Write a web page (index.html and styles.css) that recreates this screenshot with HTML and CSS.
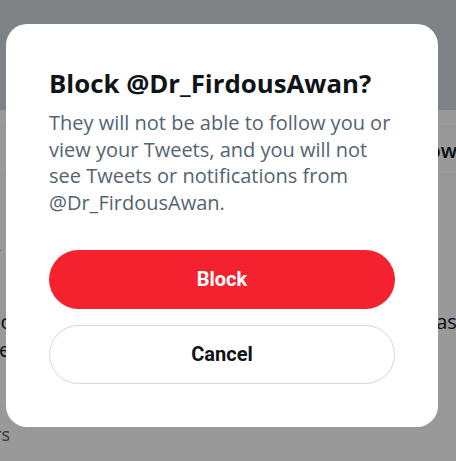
FILE: index.html
```html
<!DOCTYPE html>
<html lang="en">
<head>
    <meta charset="UTF-8">
    <meta name="viewport" content="width=device-width, initial-scale=1.0">
    <title>Block user</title>
    <link rel="stylesheet" href="styles.css">
</head>
<body>

<div class="page">
    <div class="header"></div>
    <div class="tabs">
        <span class="follow">Follow</span>
    </div>
    <div class="row bold-row">Awan</div>
    <div class="row text-row"><span>Do</span><span>ast</span></div>
    <div class="row text-row"><span>Be</span></div>
    <div class="row muted-row">Followers</div>
</div>

<div class="overlay">
    <div class="modal">
        <h1 class="modal-title">Block @Dr_FirdousAwan?</h1>
        <p class="modal-text">They will not be able to follow you or view your Tweets, and you will not see Tweets or notifications from @Dr_FirdousAwan.</p>

        <div class="actions">
            <button class="btn btn-block">Block</button>
            <button class="btn btn-cancel">Cancel</button>
        </div>
    </div>
</div>

</body>
</html>
```

FILE: styles.css
```css
/* Page behind the dialog */
body {
    margin: 0;
    padding: 0;
    background: #ffffff;
    font-family: 'Open Sans', 'Noto Sans', sans-serif;
    overflow: hidden;
}

.page {
    width: 456px;
    height: 461px;
}

.header {
    height: 110px;
    background: #d4d9dd;
}

.tabs {
    margin-top: 16px;
    height: 47px;
    border-top: 1px solid #eff3f4;
    border-bottom: 1px solid #eff3f4;
    display: flex;
    align-items: center;
    justify-content: flex-end;
}

.follow {
    font-family: 'Open Sans', sans-serif;
    font-size: 20px;
    font-weight: 600;
    color: #0f1419;
    margin-right: -1px;
}

.row {
    display: flex;
    justify-content: space-between;
    font-size: 20px;
    color: #0f1419;
}

.bold-row {
    margin-top: 58px;
    margin-left: -48px;
    font-weight: 700;
    font-family: 'Liberation Serif', serif;
}

.text-row {
    margin-left: -14px;
    margin-right: -8px;
    height: 28px;
}

.bold-row + .text-row {
    margin-top: 52px;
}

.muted-row {
    margin-top: 58px;
    margin-left: -70px;
    color: #536471;
    font-size: 18px;
}

/* Dialog */
.overlay {
    position: fixed;
    inset: 0;
    background: rgba(0, 0, 0, 0.4);
    display: flex;
    align-items: flex-start;
}

.modal {
    margin: 24px 0 0 6px;
    width: 432px;
    box-sizing: border-box;
    padding: 43px;
    background: #ffffff;
    border-radius: 21px;
    display: flex;
    flex-direction: column;
}

.modal-title {
    margin: 0;
    font-size: 25.8px;
    line-height: 32px;
    font-weight: 700;
    color: #0f1419;
}

.modal-text {
    margin: 11px 0 0;
    font-size: 20px;
    line-height: 26.7px;
    color: #536471;
}

.actions {
    margin-top: 33px;
    display: flex;
    flex-direction: column;
    gap: 16px;
}

.btn {
    height: 59px;
    border-radius: 30px;
    font-family: 'Roboto', sans-serif;
    font-size: 20px;
    font-weight: 700;
    cursor: pointer;
}

.btn-block {
    background: #f4212e;
    color: #ffffff;
    border: none;
}

.btn-cancel {
    background: #ffffff;
    color: #0f1419;
    border: 1px solid #cfd9de;
}
```
